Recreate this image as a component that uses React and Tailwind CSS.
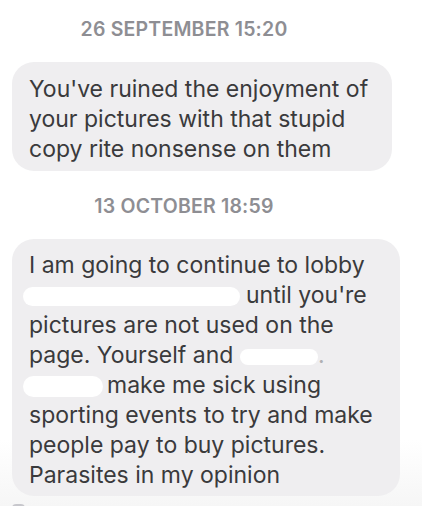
import React from "react";

const Blob = ({ w, h = 19, mr = 5 }) => (
  <span
    className="inline-block bg-white rounded-full align-middle"
    style={{ width: w, height: h, marginRight: mr }}
  />
);

export default function App() {
  return (
    <div
      className="w-[422px] h-[506px] overflow-hidden bg-[linear-gradient(to_bottom,#ffffff_0px,#ffffff_440px,#f6f6f6_506px)]"
      style={{ fontFamily: "Inter, 'Liberation Sans', sans-serif" }}
    >
      <div className="w-[368px] pt-[18px] text-center text-[19.5px] leading-[22px] font-semibold tracking-[0.2px] text-[#8e8e93]">
        26 SEPTEMBER 15:20
      </div>

      <div className="ml-[12px] mt-[22px] w-[380px] rounded-[22px] bg-[#efeef0] pl-[17px] pt-[12px] pb-[7px] text-[23px] leading-[30px] text-[#3a3a3c]">
        <div>You've ruined the enjoyment of</div>
        <div>your pictures with that stupid</div>
        <div>copy rite nonsense on them</div>
      </div>

      <div className="w-[368px] mt-[24px] text-center text-[19.5px] leading-[22px] font-semibold tracking-[0.2px] text-[#8e8e93]">
        13 OCTOBER 18:59
      </div>

      <div className="ml-[12px] mt-[22px] w-[388px] rounded-[22px] bg-[#efeef0] pl-[17px] pt-[11px] pb-[6px] text-[23px] leading-[30px] text-[#3a3a3c]">
        <div>I am going to continue to lobby</div>
        <div className="-ml-[6px] whitespace-nowrap">
          <Blob w={217} h={19} mr={6} />
          until you're
        </div>
        <div>pictures are not used on the</div>
        <div className="whitespace-nowrap">
          page. Yourself and{" "}
          <Blob w={78} h={16} mr={0} />
          <span className="text-[#b0b0b4]">.</span>
        </div>
        <div className="-ml-[6px] whitespace-nowrap">
          <Blob w={80} h={21} mr={4} />
          make me sick using
        </div>
        <div>sporting events to try and make</div>
        <div>people pay to buy pictures.</div>
        <div>Parasites in my opinion</div>
      </div>

      <div className="ml-[12px] mt-[8px] w-[13px] h-[10px] rounded-[4px] bg-[#c7c7cc]" />
    </div>
  );
}
